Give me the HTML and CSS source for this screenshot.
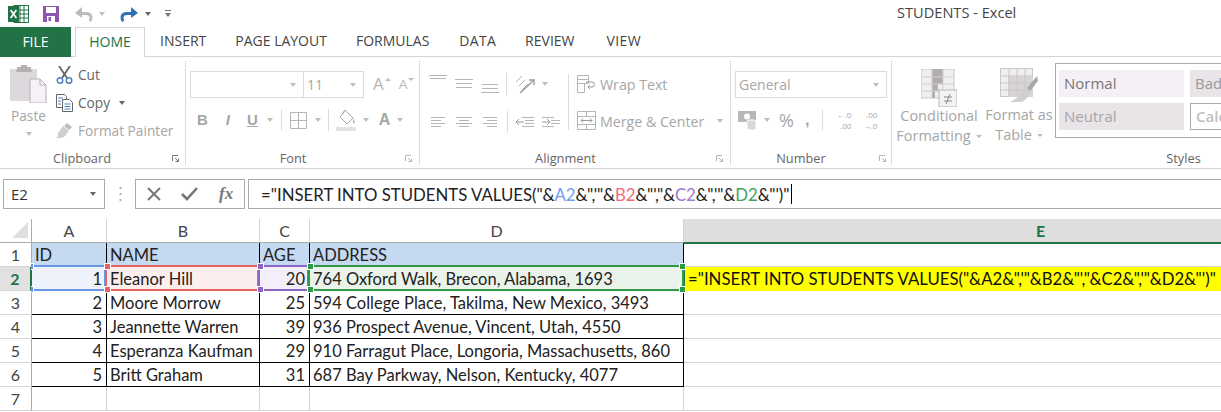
FILE: index.html
```html
<!DOCTYPE html>
<html lang="en">
<head>
<meta charset="utf-8">
<title>STUDENTS - Excel</title>
<link rel="stylesheet" href="styles.css">
</head>
<body>
<header class="titlebar">
  <div class="qat">
    <svg class="q-logo" width="21" height="18" viewBox="0 0 21 18"><rect x="6" y="0.5" width="14.5" height="17" fill="#fff" stroke="#217346"/><path d="M12 1v16M16 1v16M7 5h13M7 9h13M7 13h13" stroke="#217346" fill="none"/><rect x="0" y="1" width="11" height="16" fill="#217346"/><path d="M2.6 5l2.9 4-2.9 4M8.400 5l-2.900 4 2.900 4" stroke="#fff" stroke-width="1.700" fill="none"/></svg>
    <svg class="q-save" width="16" height="16" viewBox="0 0 16 16"><path d="M0 0h16v16H0z" fill="#8c55ae"/><rect x="3" y="1" width="10" height="6" fill="#fff"/><rect x="4" y="10" width="8" height="6" fill="#fff"/><rect x="5.500" y="11" width="2.500" height="4" fill="#8c55ae"/></svg>
    <svg class="q-undo" width="18" height="16" viewBox="0 0 18 16"><path d="M5 7.500h6c3 0 5 1.500 5 4 0 1.500-.6 3-1.500 3.500" fill="none" stroke="#bdbdbd" stroke-width="3"/><path d="M0 7l7-6v11z" fill="#bdbdbd"/></svg>
    <span class="caret q-c1"></span>
    <svg class="q-redo" width="18" height="16" viewBox="0 0 18 16"><path d="M13 7.500H7c-3 0-5 1.500-5 4 0 1.500.6 3 1.500 3.500" fill="none" stroke="#2f72b5" stroke-width="3"/><path d="M18 7l-7-6v11z" fill="#2f72b5"/></svg>
    <span class="caret dark q-c2"></span>
    <svg class="q-more" width="6" height="8" viewBox="0 0 6 8"><path d="M0 .500h6" stroke="#777"/><path d="M0 3h6L3 7z" fill="#777"/></svg>
  </div>
  <div class="doc-title">STUDENTS - Excel</div>
</header>

<nav class="tabs">
  <a class="tab-file">FILE</a>
  <a class="tab-home">HOME</a>
  <a class="tab t-first">INSERT</a>
  <a class="tab">PAGE LAYOUT</a>
  <a class="tab">FORMULAS</a>
  <a class="tab t-data">DATA</a>
  <a class="tab">REVIEW</a>
  <a class="tab t-view">VIEW</a>
</nav>

<section class="ribbon">
  <div class="group g-clip">
    <div class="g-body">
      <div class="paste">
        <svg width="37" height="38" viewBox="0 0 37 38"><rect x="0" y="4" width="27" height="32" rx="1" fill="#dcd8dc"/><path d="M7 4V2h4V0h6v2h4v2l1 3H6z" fill="#b4b0b4"/><path d="M20 14h10l6 6v18H20z" fill="#f5f1f6" stroke="#b4b0b4"/><path d="M30 14v6h6" fill="none" stroke="#b4b0b4"/></svg>
        <span class="paste-label">Paste</span>
        <span class="caret paste-caret"></span>
      </div>
      <div class="clip-list">
        <div class="clip-row">
          <svg width="17" height="18" viewBox="0 0 17 18"><path d="M3 0l8 12M14 0L6 12" stroke="#666" stroke-width="1.800" fill="none"/><circle cx="4" cy="14.500" r="2.800" fill="none" stroke="#4a7ebb" stroke-width="1.400"/><circle cx="13" cy="14.500" r="2.800" fill="none" stroke="#4a7ebb" stroke-width="1.400"/></svg>
          <span class="clip-text">Cut</span>
        </div>
        <div class="clip-row">
          <svg width="17" height="18" viewBox="0 0 17 18"><path d="M.500 .500h8l2 2v11H.500z" fill="#fff" stroke="#666"/><path d="M6.500 5.500h7l3 3v9h-10z" fill="#fff" stroke="#666"/><path d="M2 4h5M2 7h3M2 10h3" stroke="#4a7ebb"/><path d="M8.500 10h6M8.500 12.500h6M8.500 15h6" stroke="#4a7ebb"/></svg>
          <span class="clip-text">Copy</span><span class="caret dark copy-caret"></span>
        </div>
        <div class="clip-row">
          <svg width="17" height="16" viewBox="0 0 17 16"><path d="M11 0l5 4-3 3-5-4z" fill="#bdbdbd"/><path d="M7 3l6 5-5 6c-2 1-5 1-8 1 2-1 2-3 2-5z" fill="#cfcfcf"/></svg>
          <span class="clip-text off">Format Painter</span>
        </div>
      </div>
    </div>
    <div class="g-foot clip-foot"><span class="g-name">Clipboard</span><svg class="launch" width="7" height="7" viewBox="0 0 7 7"><path d="M.500 6V.500H6M3 3l3.500 3.500M6.500 3.500v3h-3" fill="none" stroke="#777"/></svg></div>
  </div>

  <div class="group g-font">
    <div class="g-body col">
      <div class="font-top">
        <div class="combo c-name"><span class="caret"></span></div>
        <div class="combo c-size"><span class="combo-val">11</span><span class="caret"></span></div>
        <span class="glyph-a grow">A<span class="caret up"></span></span>
        <span class="glyph-a shrink">A<span class="caret small"></span></span>
      </div>
      <div class="font-bot">
        <span class="fmt f-b">B</span>
        <span class="fmt f-i">I</span>
        <span class="fmt f-u">U</span>
        <span class="caret f-c1"></span>
        <span class="vsep f-s1"></span>
        <svg class="f-border" width="17" height="17" viewBox="0 0 17 17"><path d="M.500 .500h16v16H.500zM8.500 1v15M1 8.500h15" fill="none" stroke="#b5b5b5"/></svg>
        <span class="caret f-c2"></span>
        <span class="vsep f-s2"></span>
        <svg class="f-fill" width="21" height="22" viewBox="0 0 21 22"><path d="M9 1l8 8-6 6-7-7z" fill="#fff" stroke="#aaa"/><path d="M9 1L7 5" stroke="#aaa"/><path d="M17 9l2 5-2 0z" fill="#aaa"/><rect y="18" width="20" height="4" fill="#e4e2e4"/></svg>
        <span class="caret f-c3"></span>
        <span class="fmt f-a">A</span>
        <span class="caret f-c4"></span>
      </div>
    </div>
    <div class="g-foot font-foot"><span class="g-name">Font</span><svg class="launch dim" width="7" height="7" viewBox="0 0 7 7"><path d="M.500 6V.500H6M3 3l3.500 3.500M6.500 3.500v3h-3" fill="none" stroke="#b5b5b5"/></svg></div>
  </div>

  <div class="group g-align">
    <div class="g-body al-body">
      <div class="al-grid">
        <div class="al-row r1">
          <svg class="a1" width="18" height="6" viewBox="0 0 18 6"><path d="M0 .500h18M1 3.500h16" stroke="#b5b5b5"/></svg>
          <svg class="a2" width="18" height="9" viewBox="0 0 18 9"><path d="M0 .500h18M1 4.500h16M1 8.500h16" stroke="#b5b5b5"/></svg>
          <svg class="a3" width="18" height="10" viewBox="0 0 18 10"><path d="M1 1.500h16M1 5.500h16M0 9.500h18" stroke="#b5b5b5"/></svg>
          <span class="vsep a4"></span>
          <svg class="a5" width="20" height="19" viewBox="0 0 20 19"><path d="M1 7l6-6M4 11l6-6M7 15l6-6" stroke="#b5b5b5" fill="none"/><path d="M5 18L18 6M14 5h5v5" stroke="#999" fill="none" stroke-width="1.300"/></svg>
          <span class="caret a6"></span>
        </div>
        <div class="al-row r2">
          <svg class="b1" width="14" height="11" viewBox="0 0 14 11"><path d="M0 .500h14M0 3.500h10M0 6.500h14M0 9.500h10" stroke="#b5b5b5"/></svg>
          <svg class="b2" width="16" height="11" viewBox="0 0 16 11"><path d="M0 .500h16M3 3.500h10M0 6.500h16M3 9.500h10" stroke="#b5b5b5"/></svg>
          <svg class="b3" width="14" height="11" viewBox="0 0 14 11"><path d="M0 .500h14M4 3.500h10M0 6.500h14M4 9.500h10" stroke="#b5b5b5"/></svg>
          <span class="vsep b4"></span>
          <svg class="b5" width="18" height="11" viewBox="0 0 18 11"><path d="M6 .500h12M9 3.500h9M9 6.500h9M6 9.500h12" stroke="#b5b5b5"/><path d="M0 5h8M3 2L0 5l3 3" stroke="#999" fill="none"/></svg>
          <svg class="b6" width="18" height="11" viewBox="0 0 18 11"><path d="M0 .500h12M0 9.500h12M9 3.500h9M9 6.500h9" stroke="#b5b5b5"/><path d="M0 5h8M5 2l3 3-3 3" stroke="#999" fill="none"/></svg>
        </div>
      </div>
      <span class="vsep al-sep"></span>
      <div class="wrap-col">
        <div class="wrap-row">
          <svg width="19" height="18" viewBox="0 0 19 18"><path d="M.500 .500h11v4H.500zM.500 4.500h11v4H.500zM.500 8.500h7v9h-7z" fill="none" stroke="#b5b5b5"/><path d="M9 7h6a2.500 2.500 0 0 1 0 5h-4M13 10l-2 2 2 2" fill="none" stroke="#999"/></svg>
          <span class="off wrap-label">Wrap Text</span>
        </div>
        <div class="wrap-row merge">
          <svg width="19" height="19" viewBox="0 0 19 19"><path d="M.500 .500h18v18H.500zM1 5.500h17M1 13.500h17M9.500 1v4M9.500 14v4" fill="none" stroke="#b5b5b5"/><path d="M4 9.500h11M6 7.500l-2 2 2 2M13 7.500l2 2-2 2" fill="none" stroke="#999"/></svg>
          <span class="off wrap-label">Merge &amp; Center</span>
          <span class="caret merge-caret"></span>
        </div>
      </div>
    </div>
    <div class="g-foot al-foot"><span class="g-name">Alignment</span><svg class="launch dim" width="7" height="7" viewBox="0 0 7 7"><path d="M.500 6V.500H6M3 3l3.500 3.500M6.500 3.500v3h-3" fill="none" stroke="#b5b5b5"/></svg></div>
  </div>

  <div class="group g-num">
    <div class="g-body col">
      <div class="combo c-general"><span class="combo-val">General</span><span class="caret"></span></div>
      <div class="num-row">
        <svg class="n1" width="19" height="19" viewBox="0 0 19 19"><rect width="18" height="11" fill="#b8b8b8"/><circle cx="9" cy="5.500" r="3" fill="#fff"/><rect x="9" y="9" width="9" height="10" rx="2" fill="#d8d8d8" stroke="#fff"/></svg>
        <span class="caret n2"></span>
        <span class="n3">%</span>
        <span class="n4">,</span>
        <span class="vsep n5"></span>
        <span class="dec n6"><span>&#8592;.0</span><span>.00</span></span>
        <span class="dec n7"><span>.00</span><span>&#8594;.0</span></span>
      </div>
    </div>
    <div class="g-foot num-foot"><span class="g-name">Number</span><svg class="launch dim" width="7" height="7" viewBox="0 0 7 7"><path d="M.500 6V.500H6M3 3l3.500 3.500M6.500 3.500v3h-3" fill="none" stroke="#b5b5b5"/></svg></div>
  </div>

  <div class="group g-styles">
    <div class="g-body styles-body">
      <div class="big-btn b-cond">
        <svg width="36" height="38" viewBox="0 0 36 38"><rect x="0" y="0" width="33" height="29" fill="#f1eef1" stroke="#c8c8c8"/><path d="M11 0h11v8H11zM11 8h11v7h-11zM11 15h6v7h-6zM11 22h3v7h-3z" fill="#b0acb0"/><path d="M0 8h33M0 15h33M0 22h33M11 0v29M22 0v29" stroke="#cfcfcf"/><rect x="18" y="21" width="18" height="17" fill="#f5f2f5" stroke="#b5b5b5"/><path d="M23 28h8M23 32h8M29 25l-4 10" stroke="#888" fill="none"/></svg>
        <span class="big-text">Conditional</span>
        <span class="big-text">Formatting<span class="caret inl"></span></span>
      </div>
      <div class="big-btn b-table">
        <svg width="38" height="35" viewBox="0 0 38 35"><rect x="0.500" y="0.500" width="32" height="28" fill="#f1eef1" stroke="#c8c8c8"/><rect x="8" y="8" width="25" height="21" fill="#d8d4d8"/><path d="M1 8h32M1 15h32M1 22h32M9 1v28M17 1v28M25 1v28" stroke="#c8c8c8"/><path d="M37 8L27 20l3 3 8-10z" fill="#a8a8a8"/><path d="M26 21c-4 1-5 5-7 7-2 2-5 4-9 6h11c5-2 8-6 9-10z" fill="#cfcfcf"/></svg>
        <span class="big-text">Format as</span>
        <span class="big-text">Table<span class="caret inl"></span></span>
      </div>
      <div class="gallery">
        <span class="st st-normal">Normal</span>
        <span class="st st-bad">Bad</span>
        <span class="st st-neutral">Neutral</span>
        <span class="st st-calc">Calc</span>
      </div>
    </div>
    <div class="g-foot styles-foot"><span class="g-name">Styles</span></div>
  </div>
</section>

<section class="fbar">
  <div class="namebox"><span>E2</span><span class="caret dark"></span></div>
  <div class="grip"></div>
  <div class="fx-btns">
    <svg width="14" height="14" viewBox="0 0 14 14"><path d="M1 1l12 12M13 1L1 13" stroke="#777" stroke-width="2"/></svg>
    <svg width="17" height="14" viewBox="0 0 17 14"><path d="M1 7l5 5L16 1" fill="none" stroke="#777" stroke-width="2.600"/></svg>
    <span class="fx">fx</span>
  </div>
  <div class="finput">="INSERT INTO STUDENTS VALUES("&amp;<span class="r-a">A2</span>&amp;",'"&amp;<span class="r-b">B2</span>&amp;"',"&amp;<span class="r-c">C2</span>&amp;",'"&amp;<span class="r-d">D2</span>&amp;"')"<span class="cursor"></span></div>
</section>

<main class="sheet">
  <div class="corner"><svg width="16" height="16" viewBox="0 0 16 16"><path d="M16 0v16H0z" fill="#dfdfdf"/></svg></div>
  <div class="ch">A</div><div class="ch">B</div><div class="ch">C</div><div class="ch">D</div><div class="ch ch-on">E</div>

  <div class="rh">1</div>
  <div class="c hd bk">ID</div><div class="c hd bk">NAME</div><div class="c hd bk">AGE</div><div class="c hd bk">ADDRESS</div><div class="c e-plain"></div>

  <div class="rh rh-on">2</div>
  <div class="c bk n s-a">1<i class="mark m-a"><b class="h tl"></b><b class="h bl"></b></i></div>
  <div class="c bk s-b">Eleanor Hill<i class="mark m-b"><b class="h tl"></b><b class="h bl"></b></i></div>
  <div class="c bk n s-c">20<i class="mark m-c"><b class="h tl"></b><b class="h bl"></b></i></div>
  <div class="c bk s-d">764 Oxford Walk, Brecon, Alabama, 1693<i class="mark m-d"><b class="h tl"></b><b class="h bl"></b><b class="h tr"></b><b class="h br"></b></i></div>
  <div class="c e-sel">="INSERT INTO STUDENTS VALUES("&amp;A2&amp;",'"&amp;B2&amp;"',"&amp;C2&amp;",'"&amp;D2&amp;"')"</div>

  <div class="rh">3</div>
  <div class="c bk n">2</div><div class="c bk">Moore Morrow</div><div class="c bk n">25</div><div class="c bk">594 College Place, Takilma, New Mexico, 3493</div><div class="c e-plain"></div>

  <div class="rh">4</div>
  <div class="c bk n">3</div><div class="c bk">Jeannette Warren</div><div class="c bk n">39</div><div class="c bk">936 Prospect Avenue, Vincent, Utah, 4550</div><div class="c e-plain"></div>

  <div class="rh">5</div>
  <div class="c bk n">4</div><div class="c bk">Esperanza Kaufman</div><div class="c bk n">29</div><div class="c bk">910 Farragut Place, Longoria, Massachusetts, 860</div><div class="c e-plain"></div>

  <div class="rh">6</div>
  <div class="c bk n">5</div><div class="c bk">Britt Graham</div><div class="c bk n">31</div><div class="c bk">687 Bay Parkway, Nelson, Kentucky, 4077</div><div class="c e-plain"></div>

  <div class="rh">7</div>
  <div class="c"></div><div class="c"></div><div class="c"></div><div class="c"></div><div class="c e-plain"></div>
</main>
</body>
</html>
```

FILE: styles.css
```css
* { box-sizing: border-box; }
html, body { margin: 0; padding: 0; height: 100%; overflow: hidden; background: #fff; }
body { width: 1221px; height: 412px; font-family: "Open Sans", "Liberation Sans", sans-serif; font-size: 13.700px; color: #444; }
svg { display: block; flex: none; }

.caret { display: inline-block; flex: none; width: 0; height: 0; border-left: 3.500px solid transparent; border-right: 3.500px solid transparent; border-top: 4px solid #bdbdbd; }
.caret.dark { border-top-color: #666; }
.off { color: #a6a6a6; }

/* title bar */
.titlebar { height: 27px; display: flex; align-items: center; }
.qat { width: 897px; display: flex; align-items: center; }
.q-logo { margin-left: 8px; }
.q-save { margin-left: 14px; }
.q-undo { margin-left: 16px; }
.q-c1 { margin-left: 6px; }
.q-redo { margin-left: 15px; }
.q-c2 { margin-left: 7px; }
.q-more { margin-left: 14px; }
.doc-title { font-size: 14.600px; color: #444; white-space: nowrap; padding-bottom: 3px; }

/* tabs */
.tabs { height: 30px; display: flex; border-bottom: 1px solid #d4d4d4; font-size: 14px; color: #444; line-height: 28px; }
.tab-file { width: 71px; height: 30px; background: #217346; color: #fff; text-align: center; line-height: 30px; }
.tab-home { width: 70px; height: 30px; margin-left: 4px; border: 1px solid #d4d4d4; border-bottom: 1px solid #fff; color: #217346; text-align: center; }
.tab { margin-left: 29px; }
.t-first { margin-left: 15px; }
.t-data { margin-left: 30px; letter-spacing: .3px; }
.t-view { margin-left: 32px; letter-spacing: .4px; }

/* ribbon */
.ribbon { height: 112px; display: flex; padding: 4px 0 3px; border-bottom: 1px solid #d4d4d4; }
.group { display: flex; flex-direction: column; flex: none; border-right: 1px solid #dcdcdc; }
.g-clip { width: 186px; }
.g-font { width: 234px; }
.g-align { width: 311px; }
.g-num { width: 161px; }
.g-styles { flex: 1; min-width: 0; border-right: 0; }
.g-body { flex: none; height: 89px; display: flex; }
.g-body.col { flex-direction: column; }
.g-foot { flex: none; height: 16px; display: flex; align-items: center; line-height: 14px; font-size: 12.800px; color: #666; }
.g-name { flex: 1; text-align: center; }

/* clipboard */
.paste { margin-left: 10px; width: 37px; padding-top: 4px; display: flex; flex-direction: column; align-items: center; }
.paste-label { margin-top: 3px; color: #a6a6a6; line-height: 20px; }
.paste-caret { margin-top: 6px; }
.clip-list { margin-left: 9px; }
.clip-row { height: 28px; display: flex; align-items: center; }
.clip-text { margin: 0 0 2px 5px; color: #666; white-space: nowrap; }
.clip-text.off { color: #a6a6a6; }
.copy-caret { margin-left: 9px; }
.clip-foot { padding-right: 6px; }
.clip-foot .g-name { padding-right: 8px; }

/* font */
.font-top { display: flex; align-items: center; height: 27px; margin-top: 10px; padding-left: 4px; }
.combo { height: 27px; border: 1px solid #dcdcdc; display: flex; align-items: center; justify-content: space-between; padding: 0 7px 0 3px; color: #a6a6a6; flex: none; }
.combo-val { font-size: 14px; }
.c-name { width: 114px; justify-content: flex-end; }
.c-size { width: 60px; margin-left: 0; border-left: 0; padding-left: 3px; }
.glyph-a { display: flex; color: #b5b5b5; font-family: "Liberation Sans", sans-serif; font-size: 16px; line-height: 20px; }
.grow { margin-left: 9px; }
.shrink { margin-left: 8px; font-size: 13px; }
.caret.up { transform: rotate(180deg); margin: 3px 0 0 1px; border-left-width: 3px; border-right-width: 3px; border-top-width: 3px; }
.caret.small { margin: 3px 0 0 1px; border-left-width: 3px; border-right-width: 3px; border-top-width: 3px; }
.font-bot { margin-top: 11px; height: 22px; display: flex; align-items: center; }
.fmt { font-family: "Liberation Sans", sans-serif; font-weight: 700; font-size: 15px; color: #a6a6a6; line-height: 22px; }
.f-b { margin-left: 11px; }
.f-i { margin-left: 18px; font-style: italic; }
.f-u { margin-left: 17px; text-decoration: underline; }
.f-c1 { margin-left: 9px; }
.vsep { display: block; flex: none; width: 1px; height: 22px; background: #dcdcdc; }
.f-s1 { margin-left: 8px; }
.f-border { margin-left: 8px; }
.f-c2 { margin-left: 8px; }
.f-s2 { margin-left: 7px; }
.f-fill { margin-left: 7px; }
.f-c3 { margin-left: 6px; }
.f-a { margin-left: 10px; font-size: 16px; }
.f-c4 { margin-left: 7px; }
.font-foot .g-name { padding-right: 5px; }
.font-foot .launch { margin-right: 7px; }

/* alignment */
.al-body { padding-left: 9px; }
.al-grid { width: 139px; }
.al-row { display: flex; }
.r1 { height: 36px; padding-top: 14px; align-items: flex-start; }
.r2 { margin-top: 14px; height: 22px; align-items: center; }
.a2 { margin: 4px 0 0 8px; }
.a3 { margin: 8px 0 0 8px; }
.a4 { margin: -2px 0 0 7px; }
.a5 { margin: 0 0 0 8px; }
.a6 { margin: 7px 0 0 7px; }
.b1 { margin-left: 2px; }
.b2 { margin-left: 11px; }
.b3 { margin-left: 11px; }
.b4 { margin-left: 10px; }
.b5 { margin-left: 8px; }
.b6 { margin-left: 8px; }
.al-sep { margin-top: 13px; height: 56px; }
.wrap-col { margin-left: 8px; padding-top: 13px; }
.wrap-row { display: flex; align-items: center; height: 19px; gap: 4px; font-size: 14.200px; white-space: nowrap; }
.wrap-label { padding-top: 2px; }
.merge { margin-top: 18px; }
.merge-caret { margin-left: 9px; }
.al-foot .g-name { padding-right: 5px; }
.al-foot .launch { margin-right: 7px; }

/* number */
.c-general { width: 152px; margin: 10px 0 0 4px; padding-left: 3px; }
.num-row { margin-top: 11px; height: 22px; display: flex; align-items: center; color: #a6a6a6; }
.n1 { margin-left: 7px; }
.n2 { margin-left: 7px; }
.n3 { margin-left: 9px; font-size: 18px; line-height: 22px; }
.n4 { margin-left: 11px; font-family: "Liberation Sans", sans-serif; font-weight: 700; font-size: 16px; line-height: 16px; }
.n5 { margin-left: 13px; }
.dec { display: flex; flex-direction: column; font-size: 8px; line-height: 11px; text-align: right; width: 18px; }
.n6 { margin-left: 10px; }
.n7 { margin-left: 8px; }
.num-foot .g-name { padding-right: 8px; }
.num-foot .launch { margin-right: 5px; }

/* styles */
.styles-body { overflow: hidden; }
.big-btn { flex: none; display: flex; flex-direction: column; align-items: center; color: #a6a6a6; font-size: 14.500px; line-height: 20px; padding-top: 8px; }
.b-cond { width: 94px; }
.b-table { width: 56px; padding-top: 7px; margin-left: 5px; }
.b-cond svg { margin-bottom: -1px; }
.b-table svg { margin-bottom: 2px; }
.big-text { white-space: nowrap; }
.caret.inl { margin: 0 0 2px 5px; vertical-align: middle; border-left-width: 3px; border-right-width: 3px; border-top-width: 3px; }
.gallery { flex: none; width: 220px; height: 75px; margin: 2px 0 0 8px; border: 1px solid #ababab; border-right: 0; padding: 6px 0 0 3px; display: grid; grid-template-columns: 125px 80px; grid-template-rows: 27px 27px; column-gap: 6px; row-gap: 6px; font-size: 15px; }
.st { display: flex; align-items: center; padding: 0 0 2px 5px; color: #777; }
.st-normal { background: #f4f0f5; }
.st-bad { background: #e8e4e8; color: #999; }
.st-neutral { background: #e8e4e8; color: #a6a6a6; }
.st-calc { border: 1px solid #ababab; color: #c0c0c0; font-weight: 600; }
.styles-foot .g-name { padding-left: 254px; }

/* formula bar */
.fbar { height: 30px; margin-top: 10px; display: flex; align-items: stretch; padding-left: 3px; }
.namebox { width: 102px; border: 1px solid #ababab; display: flex; align-items: center; justify-content: space-between; padding: 0 8px 0 7px; font-size: 15px; color: #333; }
.grip { width: 30px; background: radial-gradient(circle, #aaa 1px, transparent 1.200px) center / 3px 6px repeat-y; margin: 8px 0; }
.fx-btns { width: 110px; border: 1px solid #ababab; display: flex; align-items: center; padding-left: 11px; gap: 20px; }
.fx { font-family: "Liberation Serif", serif; font-style: italic; font-weight: 700; font-size: 17px; color: #777; margin-left: 1px; }
.finput { flex: 1; margin-left: 3px; border: 1px solid #ababab; border-right: 0; display: flex; align-items: center; padding-left: 12px; font-family: Lato, sans-serif; font-size: 16.800px; color: #222; white-space: pre; }
.r-a { color: #6f9be8; }
.r-b { color: #ef6b78; }
.r-c { color: #9a7bd0; }
.r-d { color: #3fa45b; }
.cursor { display: inline-block; width: 1px; height: 20px; background: #000; margin-left: 1px; }

/* sheet */
.sheet { margin-top: 10px; display: grid; grid-template-columns: 32px 75px 153px 50px 374px 537px; grid-template-rows: repeat(8, 24px); font-family: Lato, sans-serif; font-size: 16.500px; color: #222; }
.corner { border-right: 1px solid #ababab; border-bottom: 1px solid #ababab; padding: 3px 0 0 12px; overflow: hidden; }
.ch { display: flex; align-items: center; justify-content: center; border-right: 1px solid #d4d4d4; border-bottom: 1px solid #ababab; color: #444; font-size: 16px; }
.ch-on { background: #dedede; color: #217346; font-weight: 700; border-bottom: 2px solid #217346; border-right: 0; height: 25px; padding-left: 176px; }
.rh { display: flex; align-items: center; justify-content: center; border-right: 1px solid #ababab; border-bottom: 1px solid #d4d4d4; color: #444; font-size: 16px; }
.rh-on { background: #e1e1e1; color: #217346; font-weight: 700; border-right: 2px solid #217346; }
.c { position: relative; display: flex; align-items: center; padding: 0 4px 0 3px; border-right: 1px solid #d4d4d4; border-bottom: 1px solid #d4d4d4; white-space: nowrap; }
.bk { border-right-color: #000; border-bottom-color: #000; }
.n { justify-content: flex-end; }
.hd { background: #c5d9f1; }
.e-plain { border-right: 0; }
.e-sel { background: #ff0; color: #111; border: 0; padding: 0 0 1px 4px; font-size: 16.750px; }
.s-a { background: #eef2fb; }
.s-b { background: #fdeeee; }
.s-c { background: #f3effa; }
.s-d { background: #eaf3ea; }

/* formula range marks */
.mark { position: absolute; left: -2px; right: 0; top: -2px; bottom: -1px; border: 2px solid; pointer-events: none; z-index: 1; }
.m-a { color: #6a96e8; left: 1px; border-left: 0; }
.m-b { color: #e86163; }
.m-c { color: #8d66c6; }
.m-d { color: #2f9a46; right: -1px; }
.h { position: absolute; width: 7px; height: 7px; background: currentColor; border: 1px solid #fff; z-index: 2; }
.tl { left: -3px; top: -4px; }
.bl { left: -3px; bottom: -4px; }
.tr { right: -4px; top: -4px; }
.br { right: -4px; bottom: -4px; }
.m-a .tl, .m-a .bl { left: -2px; width: 3px; border-left: 0; }
.e-sel::before { content: ""; position: absolute; left: -1px; top: 0; bottom: 0; width: 2px; background: #217346; }
```
